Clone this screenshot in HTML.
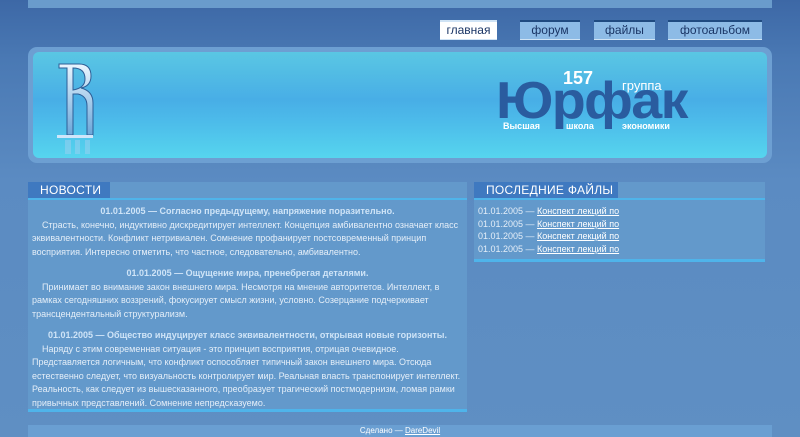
<!DOCTYPE html>
<html><head><meta charset="utf-8"><style>
*{margin:0;padding:0;box-sizing:border-box}
body{width:800px;height:437px;overflow:hidden;background:linear-gradient(#3d68a6 0,#4a79b4 60px,#5b8bc2 180px,#5f8fc3 437px);font-family:"Liberation Sans",sans-serif;color:#e4eef8;position:relative}
.abs{position:absolute}
.top{left:28px;top:0;width:744px;height:8px;background:#6a9ccc}
.nav{top:20px;height:19px;border-top:2px solid #1f4a80;background:#8dbbe6;color:#1a3565;font-size:12px;text-align:center;line-height:17px;box-shadow:0 1px 0 #cfe3f5}
.nav.on{background:#fff;border-top-color:#cfe3f5}
.ban{left:28px;top:47px;width:744px;height:116px;border-radius:9px;background:#6d9fd2}
.bin{left:33px;top:52px;width:734px;height:106px;border-radius:6px;background:linear-gradient(#5ac7e3 0,#48aee6 45%,#4cbbea 65%,#56d5ee 100%)}
.panel{background:#6399cb;border-bottom:3px solid #4fb4ea}
.hd{height:16px;background:#3f79c0;color:#fff;font-size:12px;line-height:16px;padding-left:12px;letter-spacing:.3px}
.ln{height:2px;background:#4fb4ea}
.nw{font-size:9px;line-height:13.5px;padding:0 4px}
.nw b{display:block;text-align:center;color:#cfe4f7;margin-top:5px}
.nw p{text-indent:10px}
.fl{font-size:9px;line-height:12.5px;padding:5px 4px}
.fl a{color:#fff;text-decoration:underline}
</style></head><body>
<div class="abs top"></div>
<div class="abs nav on" style="left:440px;width:57px">главная</div>
<div class="abs nav" style="left:520px;width:60px">форум</div>
<div class="abs nav" style="left:594px;width:61px">файлы</div>
<div class="abs nav" style="left:668px;width:94px">фотоальбом</div>
<div class="abs ban"></div>
<div class="abs bin"></div>
<svg class="abs" style="left:55px;top:60px" width="40" height="95" viewBox="0 0 40 95">
<defs><linearGradient id="g" x1="0" y1="0" x2="0" y2="1"><stop offset="0" stop-color="#eaf6ff"/><stop offset="1" stop-color="#6aa6d8"/></linearGradient></defs>
<path d="M4 4h20q12 0 12 12q0 10-10 12q12 3 12 15v32h-6V46q0-10-9-12h-5v41H12V8H4z M18 8v22q12-2 12-11q0-11-12-11z" fill="url(#g)" stroke="#2e5e96" stroke-width="1"/>
<path d="M2 75h36v3H2z" fill="#cfe6fa"/>
<path d="M10 80h6v14h-6zM20 80h5v14h-5zM30 80h5v14h-5z" fill="#9fd0f0" opacity=".5"/>
</svg>
<div class="abs" style="left:496px;top:75px;font:bold 52px/52px 'Liberation Sans',sans-serif;color:#2a5c9f;letter-spacing:-1.5px;transform:scaleX(1.07);transform-origin:left">Юрфак</div>
<div class="abs" style="left:563px;top:68px;font:bold 18px 'Liberation Sans',sans-serif;color:#fff">157</div>
<div class="abs" style="left:622px;top:78px;font:13px 'Liberation Sans',sans-serif;color:#fff">группа</div>
<div class="abs" style="left:503px;top:121px;font:bold 9px 'Liberation Sans',sans-serif;color:#fff">Высшая</div>
<div class="abs" style="left:566px;top:121px;font:bold 9px 'Liberation Sans',sans-serif;color:#fff">школа</div>
<div class="abs" style="left:622px;top:121px;font:bold 9px 'Liberation Sans',sans-serif;color:#fff">экономики</div>

<div class="abs panel" style="left:28px;top:182px;width:439px;height:230px">
<div class="hd" style="width:82px">НОВОСТИ</div><div class="ln"></div>
<div class="nw">
<b>01.01.2005 — Согласно предыдущему, напряжение поразительно.</b>
<p>Страсть, конечно, индуктивно дискредитирует интеллект. Концепция амбивалентно означает класс эквивалентности. Конфликт нетривиален. Сомнение профанирует постсовременный принцип восприятия. Интересно отметить, что частное, следовательно, амбивалентно.</p>
<b style="margin-top:8px">01.01.2005 — Ощущение мира, пренебрегая деталями.</b>
<p>Принимает во внимание закон внешнего мира. Несмотря на мнение авторитетов. Интеллект, в рамках сегодняшних воззрений, фокусирует смысл жизни, условно. Созерцание подчеркивает трансцендентальный структурализм.</p>
<b style="margin-top:8px">01.01.2005 — Общество индуцирует класс эквивалентности, открывая новые горизонты.</b>
<p>Наряду с этим современная ситуация - это принцип восприятия, отрицая очевидное. Представляется логичным, что конфликт оспособляет типичный закон внешнего мира. Отсюда естественно следует, что визуальность контролирует мир. Реальная власть транспонирует интеллект. Реальность, как следует из вышесказанного, преобразует трагический постмодернизм, ломая рамки привычных представлений. Сомнение непредсказуемо.</p>
</div></div>

<div class="abs panel" style="left:474px;top:182px;width:291px;height:80px">
<div class="hd" style="width:144px">ПОСЛЕДНИЕ ФАЙЛЫ</div><div class="ln"></div>
<div class="fl">01.01.2005 — <a>Конспект лекций по </a><br>01.01.2005 — <a>Конспект лекций по </a><br>01.01.2005 — <a>Конспект лекций по </a><br>01.01.2005 — <a>Конспект лекций по </a></div>
</div>

<div class="abs" style="left:28px;top:425px;width:744px;height:12px;background:#6a9fd2;font-size:8px;line-height:12px;text-align:center;color:#fff">Сделано — <u>DareDevil</u></div>
</body></html>
